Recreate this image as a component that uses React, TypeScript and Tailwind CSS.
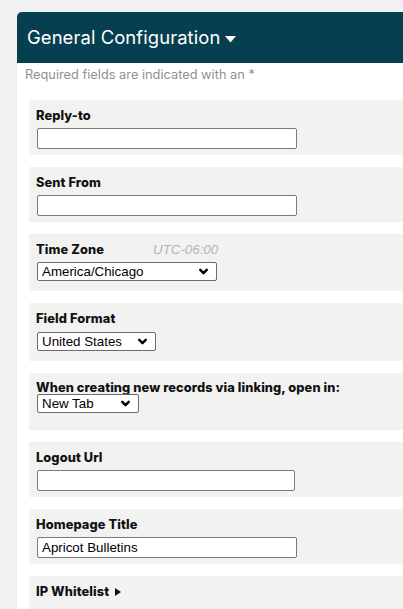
import { ChevronDown } from "lucide-react";

interface SelectProps {
  value: string;
  options: string[];
  width: string;
  className?: string;
}

const FakeSelect = ({ value, options, width, className }: SelectProps) => {
  return (
    <div className={`relative ${width} ${className ?? ""}`}>
      <select
        defaultValue={value}
        className="block w-full h-[19px] appearance-none bg-white border border-[#6b6b6b] rounded-[2px] pl-[4px] pr-5 text-[13.33px] leading-[17px] text-black focus:outline-none"
        style={{ fontFamily: '"Liberation Sans", Arial, sans-serif' }}
      >
        {options.map((option) => (
          <option key={option} value={option}>
            {option}
          </option>
        ))}
      </select>
      <ChevronDown
        size={13}
        strokeWidth={4.5}
        className="absolute right-[7px] top-[3px] text-black pointer-events-none"
      />
    </div>
  );
};

const TextInput = ({ value, width }: { value?: string; width: string }) => {
  return (
    <input
      type="text"
      defaultValue={value}
      className={`block ml-px ${width} h-[21px] bg-white border border-[#7a7a7a] rounded-[2px] px-[4px] text-[13.33px] text-black focus:outline-none`}
      style={{ fontFamily: '"Liberation Sans", Arial, sans-serif' }}
    />
  );
};

const Label = ({ children }: { children: React.ReactNode }) => (
  <label className="block text-[12.8px] leading-4 font-extrabold text-[#111111] tracking-[0.1px]">
    {children}
  </label>
);

const App = () => {
  return (
    <div
      className="min-h-screen w-full overflow-hidden bg-[#f1f1f1] pt-3 pl-[17px]"
      style={{ fontFamily: "Inter, 'Noto Sans', sans-serif" }}
    >
      <div className="h-[51px] bg-[#053f50] rounded-tl-[5px] flex items-center pl-[10px] pt-px">
        <h1 className="text-white text-[18.4px] font-normal tracking-[0.1px]">
          General Configuration
        </h1>
        <svg width="11" height="7" viewBox="0 0 11 7" className="ml-[5px] mt-[2px]">
          <polygon points="0,0 11,0 5.5,6.5" fill="white" />
        </svg>
      </div>

      <div className="bg-white min-h-[560px] pt-[4px]">
        <p className="pl-[8px] text-[12.8px] leading-4 text-[#919191]">
          Required fields are indicated with an *
        </p>

        <div className="ml-3 mt-[17px] flex flex-col gap-3">
          <div className="bg-[#f2f2f1] pl-[7px] pt-[8px] pb-[6px]">
            <Label>Reply-to</Label>
            <div className="mt-[4px]">
              <TextInput width="w-[260px]" />
            </div>
          </div>

          <div className="bg-[#f2f2f1] pl-[7px] pt-[8px] pb-[6px]">
            <Label>Sent From</Label>
            <div className="mt-[4px]">
              <TextInput width="w-[260px]" />
            </div>
          </div>

          <div className="bg-[#f2f2f1] pl-[7px] pt-[8px] pb-[10px]">
            <div className="flex items-center">
              <div className="w-[117px]">
                <Label>Time Zone</Label>
              </div>
              <span
                className="text-[13.33px] leading-4 italic text-[#b4b4b4]"
                style={{ fontFamily: '"Liberation Sans", Arial, sans-serif' }}
              >
                UTC-06:00
              </span>
            </div>
            <FakeSelect
              value="America/Chicago"
              options={["America/Chicago", "America/New_York", "America/Denver", "America/Los_Angeles"]}
              width="w-[180px]"
              className="mt-[4px] ml-px"
            />
          </div>

          <div className="bg-[#f2f2f1] pl-[7px] pt-[8px] pb-[10px]">
            <Label>Field Format</Label>
            <FakeSelect
              value="United States"
              options={["United States", "International"]}
              width="w-[119px]"
              className="mt-[5px] ml-px"
            />
          </div>

          <div className="bg-[#f2f2f1] pl-[7px] pt-[7px] pb-[17px]">
            <Label>When creating new records via linking, open in:</Label>
            <FakeSelect
              value="New Tab"
              options={["New Tab", "Same Tab", "Popup"]}
              width="w-[102px]"
              className="mt-[-2px] ml-px"
            />
          </div>

          <div className="bg-[#f2f2f1] pl-[7px] pt-[8px] pb-[6px]">
            <Label>Logout Url</Label>
            <div className="mt-[4px]">
              <TextInput width="w-[258px]" />
            </div>
          </div>

          <div className="bg-[#f2f2f1] pl-[7px] pt-[8px] pb-[6px]">
            <Label>Homepage Title</Label>
            <div className="mt-[4px]">
              <TextInput width="w-[260px]" value="Apricot Bulletins" />
            </div>
          </div>

          <div className="bg-[#f2f2f1] pl-[7px] pt-[8px] pb-[30px]">
            <div className="flex items-center">
              <Label>IP Whitelist</Label>
              <svg width="6" height="8" viewBox="0 0 6 8" className="ml-[6px]">
                <polygon points="0,0 6,4 0,8" fill="#151515" />
              </svg>
            </div>
          </div>
        </div>
      </div>
    </div>
  );
};

export default App;
